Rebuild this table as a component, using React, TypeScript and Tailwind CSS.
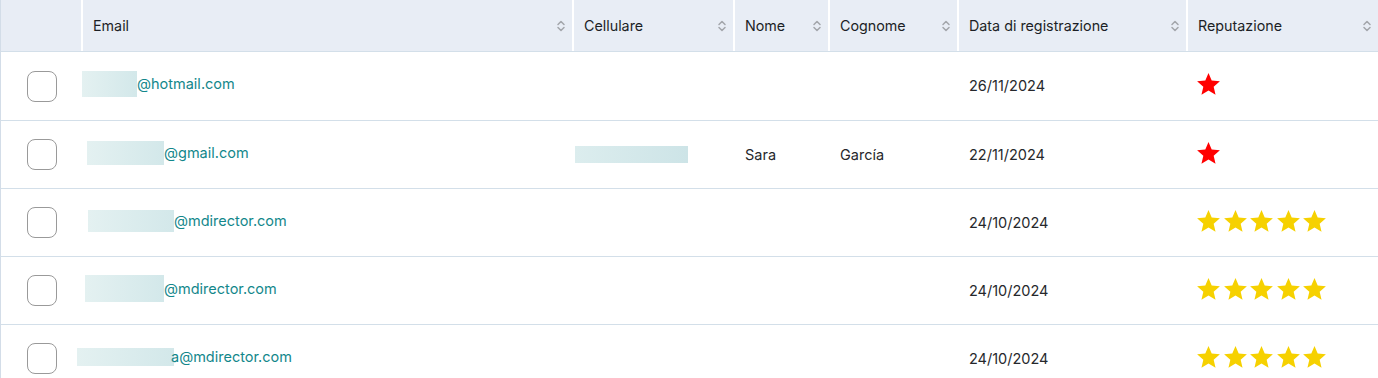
const columns = [
  { label: "", w: "w-[80px]" },
  { label: "Email", w: "w-[489px]" },
  { label: "Cellulare", w: "w-[159px]" },
  { label: "Nome", w: "w-[93px]" },
  { label: "Cognome", w: "w-[127px]" },
  { label: "Data di registrazione", w: "w-[227px]" },
  { label: "Reputazione", w: "flex-1" },
];

const rows = [
  {
    mask: "ml-[-1px] w-[55px] h-[26px]",
    domain: "@hotmail.com",
    phone: false,
    nome: "",
    cognome: "",
    date: "26/11/2024",
    stars: 1,
  },
  {
    mask: "ml-[4px] w-[77px] h-[24px]",
    domain: "@gmail.com",
    phone: true,
    nome: "Sara",
    cognome: "García",
    date: "22/11/2024",
    stars: 1,
  },
  {
    mask: "ml-[5px] w-[86px] h-[22px]",
    domain: "@mdirector.com",
    phone: false,
    nome: "",
    cognome: "",
    date: "24/10/2024",
    stars: 5,
  },
  {
    mask: "ml-[2px] w-[79px] h-[27px]",
    domain: "@mdirector.com",
    phone: false,
    nome: "",
    cognome: "",
    date: "24/10/2024",
    stars: 5,
  },
  {
    mask: "ml-[-6px] w-[97px] h-[18px] mr-[-3px]",
    domain: "a@mdirector.com",
    phone: false,
    nome: "",
    cognome: "",
    date: "24/10/2024",
    stars: 5,
  },
];

function SortIcon() {
  return (
    <svg width="10" height="16" viewBox="0 0 10 16" fill="none" className="shrink-0">
      <path d="M2 6.5 L5 3.5 L8 6.5" stroke="#a3a6ab" strokeWidth="1.5" strokeLinecap="round" strokeLinejoin="round" />
      <path d="M2 9.5 L5 12.5 L8 9.5" stroke="#a3a6ab" strokeWidth="1.5" strokeLinecap="round" strokeLinejoin="round" />
    </svg>
  );
}

function Star({ color }: { color: string }) {
  return (
    <svg width="23" height="22" viewBox="2 2 20 19.3" className="shrink-0">
      <path
        d="M12 17.27L18.18 21l-1.64-7.03L22 9.24l-7.19-.61L12 2 9.19 8.63 2 9.24l5.46 4.73L5.82 21z"
        fill={color}
      />
    </svg>
  );
}

export default function App() {
  return (
    <div
      className="w-[1378px] h-[378px] overflow-hidden bg-white border-l border-[#d3dde8] text-[14.5px]"
      style={{ fontFamily: "Inter, 'Liberation Sans', sans-serif" }}
    >
      {/* Header */}
      <div className="flex gap-[2px] bg-white h-[52px] border-b border-[#d3dfe9]">
        {columns.map((c, i) => (
          <div
            key={i}
            className={`${c.w} shrink-0 bg-[#e8edf5] flex items-center justify-between pl-[10px] pr-[6px] text-[#1c1f26] font-normal text-[14.3px]`}
          >
            <span>{c.label}</span>
            {i > 0 && <SortIcon />}
          </div>
        ))}
      </div>

      {/* Rows */}
      {rows.map((r, idx) => (
        <div
          key={idx}
          className={`flex gap-[2px] ${idx === 0 ? "h-[69px]" : "h-[68px]"} border-b border-[#d3dfe9] text-[#26282c]`}
        >
          <div className="w-[80px] shrink-0 flex items-center pl-[26px]">
            <div className="w-[30px] h-[31px] rounded-[8px] border border-[#9a9a9a] bg-white" />
          </div>
          <div className="w-[489px] shrink-0 flex items-center pb-[4px]">
            <div className={`${r.mask} bg-gradient-to-r from-[#e4f1f1] to-[#d3e8ea]`} />
            <span className="text-[#13878b]">{r.domain}</span>
          </div>
          <div className="w-[159px] shrink-0 flex items-center">
            {r.phone && (
              <div className="w-[113px] h-[17px] ml-[1px] bg-gradient-to-r from-[#dcedee] to-[#cde4e7]" />
            )}
          </div>
          <div className="w-[93px] shrink-0 flex items-center pl-[10px]">{r.nome}</div>
          <div className="w-[127px] shrink-0 flex items-center pl-[10px]">{r.cognome}</div>
          <div className="w-[227px] shrink-0 flex items-center pl-[10px]">{r.date}</div>
          <div className="flex-1 flex items-center pl-[9px] pb-[4px] gap-[3.5px]">
            {Array.from({ length: r.stars }).map((_, s) => (
              <Star key={s} color={r.stars === 1 ? "#ff0000" : "#f6d100"} />
            ))}
          </div>
        </div>
      ))}
    </div>
  );
}
